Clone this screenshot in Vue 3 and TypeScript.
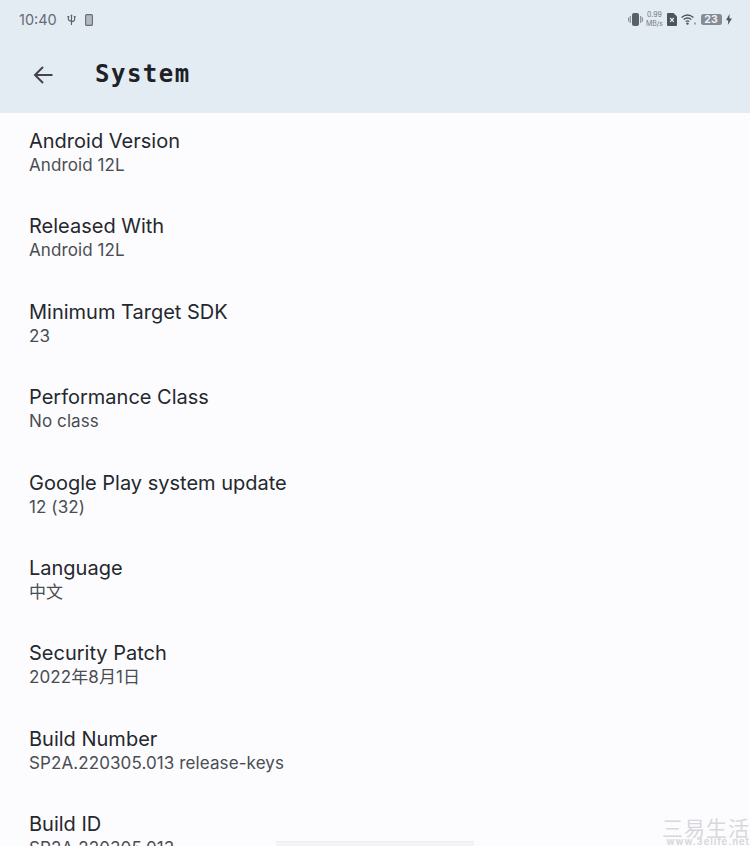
<script setup lang="ts">
interface InfoRow {
  label: string;
  value: string;
}

const rows: InfoRow[] = [
  { label: 'Android Version', value: 'Android 12L' },
  { label: 'Released With', value: 'Android 12L' },
  { label: 'Minimum Target SDK', value: '23' },
  { label: 'Performance Class', value: 'No class' },
  { label: 'Google Play system update', value: '12 (32)' },
  { label: 'Language', value: '中文' },
  { label: 'Security Patch', value: '2022年8月1日' },
  { label: 'Build Number', value: 'SP2A.220305.013 release-keys' },
  { label: 'Build ID', value: 'SP2A.220305.013' },
];
</script>

<template>
  <div class="screen">
    <header class="app-bar">
      <div class="status-bar">
        <div class="status-left">
          <span class="time">10:40</span>
          <svg class="usb" width="9" height="12" viewBox="0 0 10 13">
            <path d="M5 12V1M1.500 3v2.500q0 2 3.500 2.500t3.500-2.500V3" fill="none" stroke="#5c626b" stroke-width="1.300" />
            <path d="M5 0 3.800 2h2.400zM.5 2h2v1.500h-2zM7.500 2h2v1.500h-2z" fill="#5c626b" />
          </svg>
          <svg class="phone" width="8" height="12" viewBox="0 0 8 12">
            <rect x=".6" y=".6" width="6.800" height="10.800" rx="1" fill="#b4b9c0" stroke="#666c75" stroke-width="1.100" />
          </svg>
        </div>
        <div class="status-right">
          <svg width="15" height="13" viewBox="0 0 15 13">
            <rect x="4" y="0" width="7" height="13" rx="2" fill="#5a6068" />
            <path d="M2.300 3v7M.6 4.500v4M12.700 3v7M14.400 4.500v4" stroke="#858b93" stroke-width="1.100" />
          </svg>
          <span class="speed"><span>0.99</span><span>MB/s</span></span>
          <svg width="10" height="13" viewBox="0 0 10 13">
            <path d="M1 0h5.500L10 3.500V12a1 1 0 0 1-1 1H1a1 1 0 0 1-1-1V1a1 1 0 0 1 1-1z" fill="#4e545c" />
            <path d="M3.200 5l3.600 3.800M6.800 5 3.200 8.800" stroke="#e4ecf4" stroke-width="1.200" />
          </svg>
          <svg width="15" height="11" viewBox="0 0 15 11">
            <path d="M.5 3.500Q6.500-1.500 12.500 3.500M2.600 5.500Q6.500 2.500 10.400 5.500M4.600 7.500Q6.500 6.200 8.400 7.500" fill="none" stroke="#4e545c" stroke-width="1.300" />
            <circle cx="6.500" cy="9.600" r="1.200" fill="#4e545c" />
            <path d="M14 8.500v2" stroke="#6a7078" stroke-width="1.200" />
          </svg>
          <span class="battery">23</span>
          <svg class="bolt" width="6" height="11" viewBox="0 0 6 11">
            <path d="M3.500 0 0 6.300h2.300L1.800 11 6 4.500H3.400z" fill="#4e545c" />
          </svg>
        </div>
      </div>
      <div class="toolbar">
        <svg class="back" width="20" height="18" viewBox="0 0 20 18">
          <path d="M19.500 9H2M10 1 2 9l8 8" fill="none" stroke="#45434d" stroke-width="2" />
        </svg>
        <h1 class="title">System</h1>
      </div>
    </header>

    <main class="list">
      <div v-for="row in rows" :key="row.label" class="row">
        <div class="label">{{ row.label }}</div>
        <div class="value">{{ row.value }}</div>
      </div>
    </main>

    <div class="nav-handle"></div>
    <div class="watermark">
      <span class="wm-cn">三易生活</span>
      <span class="wm-url">www.3elife.net</span>
    </div>
  </div>
</template>

<style>
html,
body {
  margin: 0;
  overflow: hidden;
}
</style>

<style scoped>
.screen {
  position: relative;
  width: 750px;
  height: 846px;
  overflow: hidden;
  background: #fcfcff;
  font-family: Inter, "Noto Sans CJK SC", sans-serif;
}

.app-bar {
  height: 113px;
  background: #e3ebf3;
}

.status-bar {
  height: 39px;
  padding: 0 18px 0 19px;
  display: flex;
  align-items: center;
  justify-content: space-between;
}

.status-left {
  display: flex;
  align-items: center;
}

.time {
  font-size: 14.500px;
  color: #666c75;
  margin-right: 10px;
}

.usb {
  margin-right: 9px;
}

.status-right {
  display: flex;
  align-items: center;
  gap: 4.500px;
}

.speed {
  display: flex;
  flex-direction: column;
  align-items: center;
  width: 15px;
  font-size: 7px;
  line-height: 8.500px;
  color: #747a82;
}

.battery {
  width: 21px;
  height: 11px;
  border-radius: 2.500px;
  background: #868c94;
  color: #eef3f8;
  font-size: 10.500px;
  font-weight: 700;
  line-height: 11px;
  text-align: center;
}

.toolbar {
  display: flex;
  align-items: center;
  height: 72px;
  padding-left: 33px;
}

.title {
  margin: 0 0 2px 42px;
  font-family: "DejaVu Sans Mono", monospace;
  font-size: 24px;
  font-weight: 700;
  letter-spacing: 1.500px;
  color: #1e2125;
}

.list {
  padding-left: 29px;
}

.row {
  height: 85.400px;
}

.label {
  padding-top: 15px;
  font-size: 20px;
  line-height: 27px;
  color: #25282c;
}

.value {
  font-size: 17px;
  line-height: 21px;
  letter-spacing: 0.100px;
  color: #4a4d52;
}

.nav-handle {
  position: absolute;
  left: 276px;
  bottom: 0;
  width: 198px;
  height: 4px;
  background: #f4f4f7;
  border-top: 1px solid #ececef;
}

.watermark {
  position: absolute;
  right: 0;
  bottom: 0;
  width: 88px;
  height: 26px;
  display: flex;
  flex-direction: column;
  align-items: flex-end;
  color: #d8d8dc;
  line-height: 1;
}

.wm-cn {
  font-size: 21px;
  height: 18px;
  line-height: 18px;
  letter-spacing: 1px;
  white-space: nowrap;
}

.wm-url {
  font-size: 9.500px;
  font-weight: 700;
  height: 8px;
  line-height: 8px;
  letter-spacing: 0.900px;
  white-space: nowrap;
}
</style>
